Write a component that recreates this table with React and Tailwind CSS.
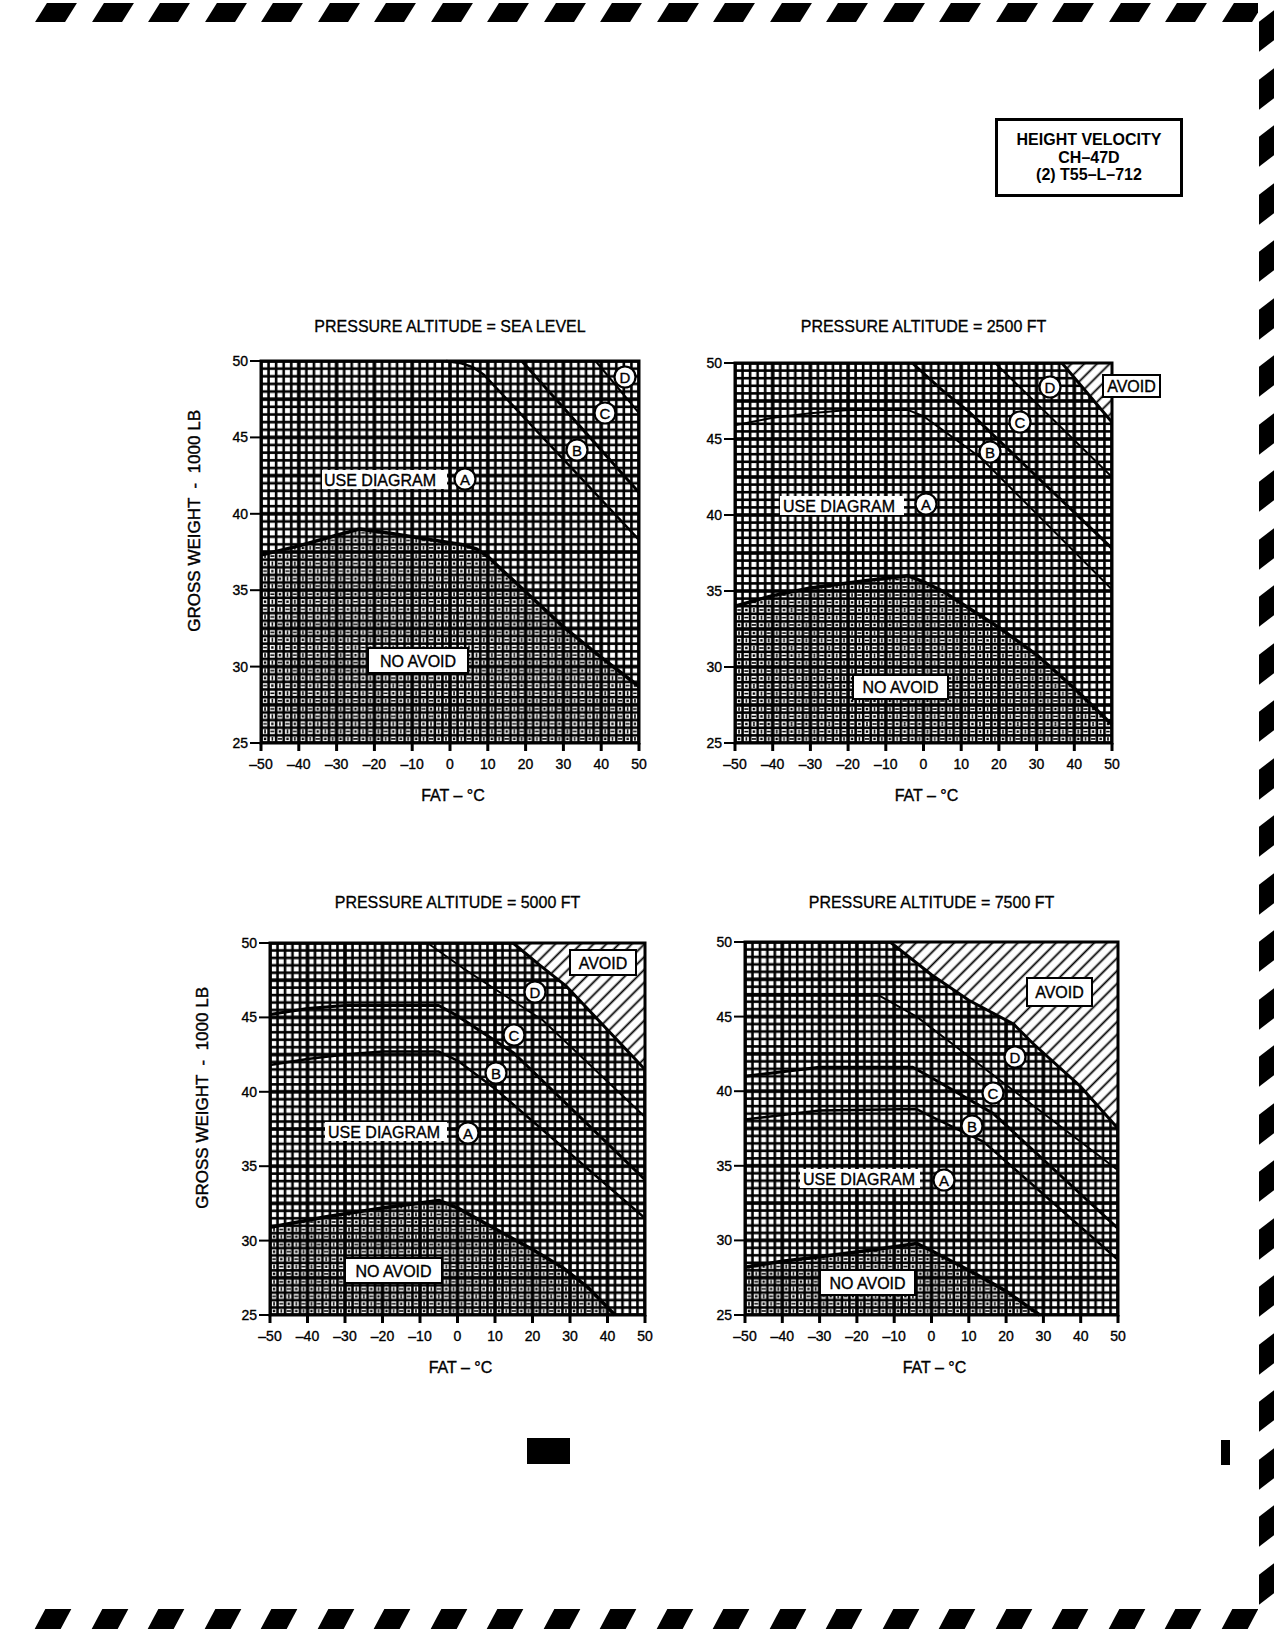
import React from "react";

// height-velocity diagram page, CH-47D
const charts = [
  {
    id: "sl",
    title: "PRESSURE ALTITUDE = SEA LEVEL",
    w: 378,
    h: 382,
    titleCls: "w-[378px]",
    gapCls: "mt-[16px]",
    noAvoid: [[-50, 37.3], [-40, 37.9], [-30, 38.6], [-24, 39], [-15, 38.7], [-5, 38.3], [3, 38], [7, 37.7], [10, 37.2], [13, 36.5], [20, 34.9], [30, 32.6], [40, 30.6], [50, 28.7]],
    lines: [
      { p: [[-1, 50], [3, 49.85], [6, 49.6], [9, 49.1], [50, 38.3]], sw: 2.5 },
      { p: [[19, 50], [50, 41.4]], sw: 3 },
      { p: [[38.5, 50], [50, 46.6]], sw: 2 },
    ],
    avoid: null,
    circles: { A: [204, 118], B: [316, 89], C: [344, 52], D: [364, 16] },
    useDiag: { x: 61, y: 109, w: 125, h: 19, tx: 63 },
    noAvoidBox: { x: 107, y: 287, w: 100, h: 25 },
    avoidBox: null,
  },
  {
    id: "k25",
    title: "PRESSURE ALTITUDE = 2500 FT",
    w: 377,
    h: 380,
    titleCls: "w-[377px]",
    gapCls: "mt-[18px]",
    noAvoid: [[-50, 34], [-40, 34.7], [-30, 35.2], [-15, 35.7], [-4, 36], [0, 35.6], [5, 35], [10, 34.2], [20, 32.6], [30, 30.8], [40, 28.6], [50, 26.2]],
    lines: [
      { p: [[-50, 45.9], [-40, 46.4], [-30, 46.7], [-20, 46.9], [-4, 46.9], [0, 46.5], [5, 45.6], [15, 43.8], [50, 35.1]], sw: 2 },
      { p: [[-3, 50], [5, 48.2], [12, 46.8], [50, 37.8]], sw: 3 },
      { p: [[19, 50], [50, 42.5]], sw: 2 },
    ],
    avoid: [[36.7, 50], [50, 46.1]],
    circles: { A: [191, 141], B: [255, 89], C: [285, 59], D: [315, 24] },
    useDiag: { x: 45, y: 133, w: 124, h: 19, tx: 48 },
    noAvoidBox: { x: 118, y: 312, w: 95, h: 24 },
    avoidBox: { x: 368, y: 12, w: 57, h: 22 },
  },
  {
    id: "k50",
    title: "PRESSURE ALTITUDE = 5000 FT",
    w: 375,
    h: 372,
    titleCls: "w-[375px]",
    gapCls: "mt-[22px]",
    noAvoid: [[-50, 30.9], [-35, 31.6], [-20, 32.2], [-5, 32.7], [0, 32.2], [10, 30.8], [20, 29.4], [28, 28.2], [35, 26.8], [42, 25]],
    lines: [
      { p: [[-50, 41.8], [-40, 42.2], [-30, 42.5], [-20, 42.7], [-5, 42.7], [0, 42.1], [10, 40.2], [50, 31.5]], sw: 2.5 },
      { p: [[-50, 45.2], [-40, 45.6], [-30, 45.8], [-5, 45.8], [0, 45.1], [15, 42.6], [50, 34.1]], sw: 3 },
      { p: [[-8, 50], [1.5, 48.3], [22.8, 44.8], [50, 38.3]], sw: 2 },
    ],
    avoid: [[14.8, 50], [22, 48.5], [29, 47.1], [50, 41.5]],
    circles: { A: [198, 190], B: [226, 130], C: [244, 92], D: [265, 49] },
    useDiag: { x: 55, y: 179, w: 122, h: 19, tx: 58 },
    noAvoidBox: { x: 75, y: 315, w: 97, h: 25 },
    avoidBox: { x: 300, y: 7, w: 66, h: 25 },
  },
  {
    id: "k75",
    title: "PRESSURE ALTITUDE = 7500 FT",
    w: 373,
    h: 373,
    titleCls: "w-[373px]",
    gapCls: "mt-[21px]",
    noAvoid: [[-50, 28.2], [-40, 28.6], [-30, 28.9], [-15, 29.4], [-4, 29.8], [0, 29.3], [10, 28], [20, 26.6], [29, 25]],
    lines: [
      { p: [[-50, 38.1], [-40, 38.4], [-30, 38.7], [-4, 38.8], [0, 38.3], [14, 36.6], [50, 28.7]], sw: 2.5 },
      { p: [[-50, 41], [-40, 41.3], [-30, 41.6], [-5, 41.6], [0, 40.9], [16.6, 38.5], [50, 30.8]], sw: 3 },
      { p: [[-50, 46.4], [-14, 46.4], [-4, 45], [50, 34.7]], sw: 2 },
    ],
    avoid: [[-11.1, 50], [0, 47.8], [10, 46.1], [22, 44.5], [27.2, 43.2], [40, 40.3], [50, 37.5]],
    circles: { A: [199, 238], B: [227, 184], C: [248, 151], D: [270, 115] },
    useDiag: { x: 55, y: 227, w: 120, h: 19, tx: 58 },
    noAvoidBox: { x: 75, y: 328, w: 95, h: 25 },
    avoidBox: { x: 282, y: 36, w: 65, h: 28 },
  },
];

// scanned print looks a touch heavier than plain Liberation Sans
const ink = { stroke: "#000", strokeWidth: 0.35 };

function Chart({ c }) {
  const mL = 45, mT = 8, mR = 50, mB = 72;
  const { w, h, id } = c;
  const sx = (t) => ((t + 50) / 100) * w;
  const sy = (v) => ((50 - v) / 25) * h;
  const pts = (a) => a.map(([t, v]) => `${sx(t).toFixed(1)},${sy(v).toFixed(1)}`).join(" ");
  const cw = w / 50, ch = h / 50;
  const half = (k) => (k % 5 === 0 ? 1.8 : 1.3);

  const cells = [];
  for (let i = 0; i < 5; i++) {
    for (let j = 0; j < 5; j++) {
      const x0 = i * cw + half(i), x1 = (i + 1) * cw - half(i + 1);
      const y0 = j * ch + half(j), y1 = (j + 1) * ch - half(j + 1);
      cells.push({ i, j, x: x0, y: y0, w: x1 - x0, h: y1 - y0 });
    }
  }

  const last = c.noAvoid[c.noAvoid.length - 1];
  const naPoly = [...c.noAvoid, ...(last[1] > 25 ? [[50, 25]] : []), [-50, 25]];

  return (
    <div className="flex flex-col">
      <div className={`ml-[45px] h-[20px] text-center text-[16px] leading-[20px] whitespace-nowrap [-webkit-text-stroke:0.3px_black] ${c.titleCls}`}>
        {c.title}
      </div>
      <svg width={mL + w + mR} height={mT + h + mB} className={`block overflow-visible ${c.gapCls}`}>
        <defs>
          <pattern id={`${id}-grid`} patternUnits="userSpaceOnUse" width={5 * cw} height={5 * ch}>
            <rect width={5 * cw} height={5 * ch} fill="#000" />
            {cells.map((q, k) => (
              <rect key={k} x={q.x} y={q.y} width={q.w} height={q.h} fill="#fff" />
            ))}
          </pattern>
          <pattern id={`${id}-dense`} patternUnits="userSpaceOnUse" width={5 * cw} height={5 * ch}>
            <rect width={5 * cw} height={5 * ch} fill="#000" />
            {cells.map((q, k) => {
              const kind = (q.i + q.j * 2) % 3;
              return (
                <g key={k}>
                  <rect x={q.x} y={q.y} width={q.w} height={q.h} fill="#fff" />
                  {kind === 0 && <rect x={q.x + q.w / 2 - 0.8} y={q.y + 0.5} width={1.6} height={q.h - 1} fill="#000" />}
                  {kind === 1 && <rect x={q.x + 0.5} y={q.y + q.h / 2 - 0.8} width={q.w - 1} height={1.6} fill="#000" />}
                  {kind === 2 && <rect x={q.x + q.w / 2 - 1.2} y={q.y + q.h / 2 - 1.2} width={2.4} height={2.4} fill="#000" />}
                </g>
              );
            })}
          </pattern>
          <pattern id={`${id}-hatch`} patternUnits="userSpaceOnUse" width="9" height="9" patternTransform="rotate(45)">
            <rect width="9" height="9" fill="#fff" />
            <line x1="4.5" y1="0" x2="4.5" y2="9" stroke="#000" strokeWidth="1.8" />
          </pattern>
        </defs>
        <g transform={`translate(${mL},${mT})`}>
          <rect width={w} height={h} fill={`url(#${id}-grid)`} />
          <polygon points={pts(naPoly)} fill={`url(#${id}-dense)`} />
          {c.avoid && <polygon points={pts([...c.avoid, [50, 50]])} fill={`url(#${id}-hatch)`} />}

          {c.lines.map((l, k) => (
            <polyline key={k} points={pts(l.p)} fill="none" stroke="#000" strokeWidth={l.sw} strokeLinejoin="round" />
          ))}
          <polyline points={pts(c.noAvoid)} fill="none" stroke="#000" strokeWidth="3.5" strokeLinejoin="round" />
          {c.avoid && <polyline points={pts(c.avoid)} fill="none" stroke="#000" strokeWidth="3" strokeLinejoin="round" />}

          <rect x="0" y="0" width={w} height={h} fill="none" stroke="#000" strokeWidth="3" />

          {[25, 30, 35, 40, 45, 50].map((v) => (
            <g key={v}>
              <line x1="-11" y1={sy(v)} x2="0" y2={sy(v)} stroke="#000" strokeWidth="2" />
              <text x="-13" y={sy(v) + 5} textAnchor="end" fontSize="14" {...ink}>{v}</text>
            </g>
          ))}
          {[-50, -40, -30, -20, -10, 0, 10, 20, 30, 40, 50].map((t) => (
            <g key={t}>
              <line x1={sx(t)} y1={h} x2={sx(t)} y2={h + 8} stroke="#000" strokeWidth="3" />
              <text x={sx(t)} y={h + 26} textAnchor="middle" fontSize="14" {...ink}>
                {t < 0 ? `\u2013${-t}` : t}
              </text>
            </g>
          ))}
          <text x={w / 2 + 3} y={h + 58} textAnchor="middle" fontSize="16" {...ink}>FAT – °C</text>

          <rect x={c.useDiag.x} y={c.useDiag.y} width={c.useDiag.w} height={c.useDiag.h} fill="#fff" />
          <text x={c.useDiag.tx} y={c.useDiag.y + c.useDiag.h / 2 + 6} fontSize="16" {...ink}>USE DIAGRAM</text>

          <rect x={c.noAvoidBox.x} y={c.noAvoidBox.y} width={c.noAvoidBox.w} height={c.noAvoidBox.h} fill="#fff" stroke="#000" strokeWidth="2" />
          <text x={c.noAvoidBox.x + c.noAvoidBox.w / 2} y={c.noAvoidBox.y + c.noAvoidBox.h / 2 + 6} textAnchor="middle" fontSize="16" {...ink}>NO AVOID</text>

          {c.avoidBox && (
            <g>
              <rect x={c.avoidBox.x} y={c.avoidBox.y} width={c.avoidBox.w} height={c.avoidBox.h} fill="#fff" stroke="#000" strokeWidth="2" />
              <text x={c.avoidBox.x + c.avoidBox.w / 2} y={c.avoidBox.y + c.avoidBox.h / 2 + 6} textAnchor="middle" fontSize="16" {...ink}>AVOID</text>
            </g>
          )}

          {Object.entries(c.circles).map(([k, [x, y]]) => (
            <g key={k}>
              <circle cx={x} cy={y} r="10.5" fill="#fff" stroke="#000" strokeWidth="2.2" />
              <text x={x} y={y + 5.5} textAnchor="middle" fontSize="15" {...ink}>{k}</text>
            </g>
          ))}
        </g>
      </svg>
    </div>
  );
}

function YTitle({ cls }) {
  return (
    <div className={`[writing-mode:vertical-rl] rotate-180 text-[17px] leading-[18px] whitespace-pre [-webkit-text-stroke:0.4px_black] ${cls}`}>
      {"GROSS WEIGHT  -  1000 LB"}
    </div>
  );
}

export default function App() {
  return (
    <div className="w-[1275px] h-[1650px] bg-white text-black overflow-hidden flex font-['Liberation_Sans',Arial,Helvetica,sans-serif]">
      <div className="w-[1258px] flex flex-col shrink-0">
        {/* top border stripes */}
        <div className="flex gap-[26.5px] pt-[3px] pl-[41px] overflow-hidden">
          {Array.from({ length: 23 }).map((_, i) => (
            <div key={i} className="w-[30px] h-[19px] shrink-0 bg-black skew-x-[-32deg]" />
          ))}
        </div>

        {/* identification box */}
        <div className="flex justify-end pr-[75px] mt-[96px]">
          <div className="w-[188px] h-[79px] border-[3px] border-black flex flex-col items-center justify-center text-[16px] leading-[17.5px] font-bold">
            <div>HEIGHT VELOCITY</div>
            <div>CH–47D</div>
            <div>(2) T55–L–712</div>
          </div>
        </div>

        {/* row 1 */}
        <div className="flex items-start pl-[186px] mt-[120px]">
          <YTitle cls="mt-[93px]" />
          <div className="ml-[12px]">
            <Chart c={charts[0]} />
          </div>
          <div className="ml-[1px]">
            <Chart c={charts[1]} />
          </div>
        </div>

        {/* row 2 */}
        <div className="flex items-start pl-[194px] mt-[78px]">
          <YTitle cls="mt-[94px]" />
          <div className="ml-[13px]">
            <Chart c={charts[2]} />
          </div>
          <div className="ml-[5px]">
            <Chart c={charts[3]} />
          </div>
        </div>

        {/* page marks */}
        <div className="flex items-start mt-[51px] pl-[527px]">
          <div className="w-[43px] h-[26px] bg-black" />
          <div className="ml-[651px] mt-[2px] w-[9px] h-[25px] bg-black" />
        </div>

        {/* bottom border stripes */}
        <div className="flex gap-[30.5px] mt-[144px] pl-[40px] overflow-hidden">
          {Array.from({ length: 23 }).map((_, i) => (
            <div key={i} className="w-[26px] h-[20px] shrink-0 bg-black skew-x-[-28deg]" />
          ))}
        </div>
      </div>

      {/* right border stripes */}
      <div className="w-[17px] flex flex-col gap-[27.5px] pt-[16px] pl-[1px] shrink-0">
        {Array.from({ length: 28 }).map((_, i) => (
          <div key={i} className="w-[15px] h-[30px] shrink-0 bg-black skew-y-[-38deg]" />
        ))}
      </div>
    </div>
  );
}
